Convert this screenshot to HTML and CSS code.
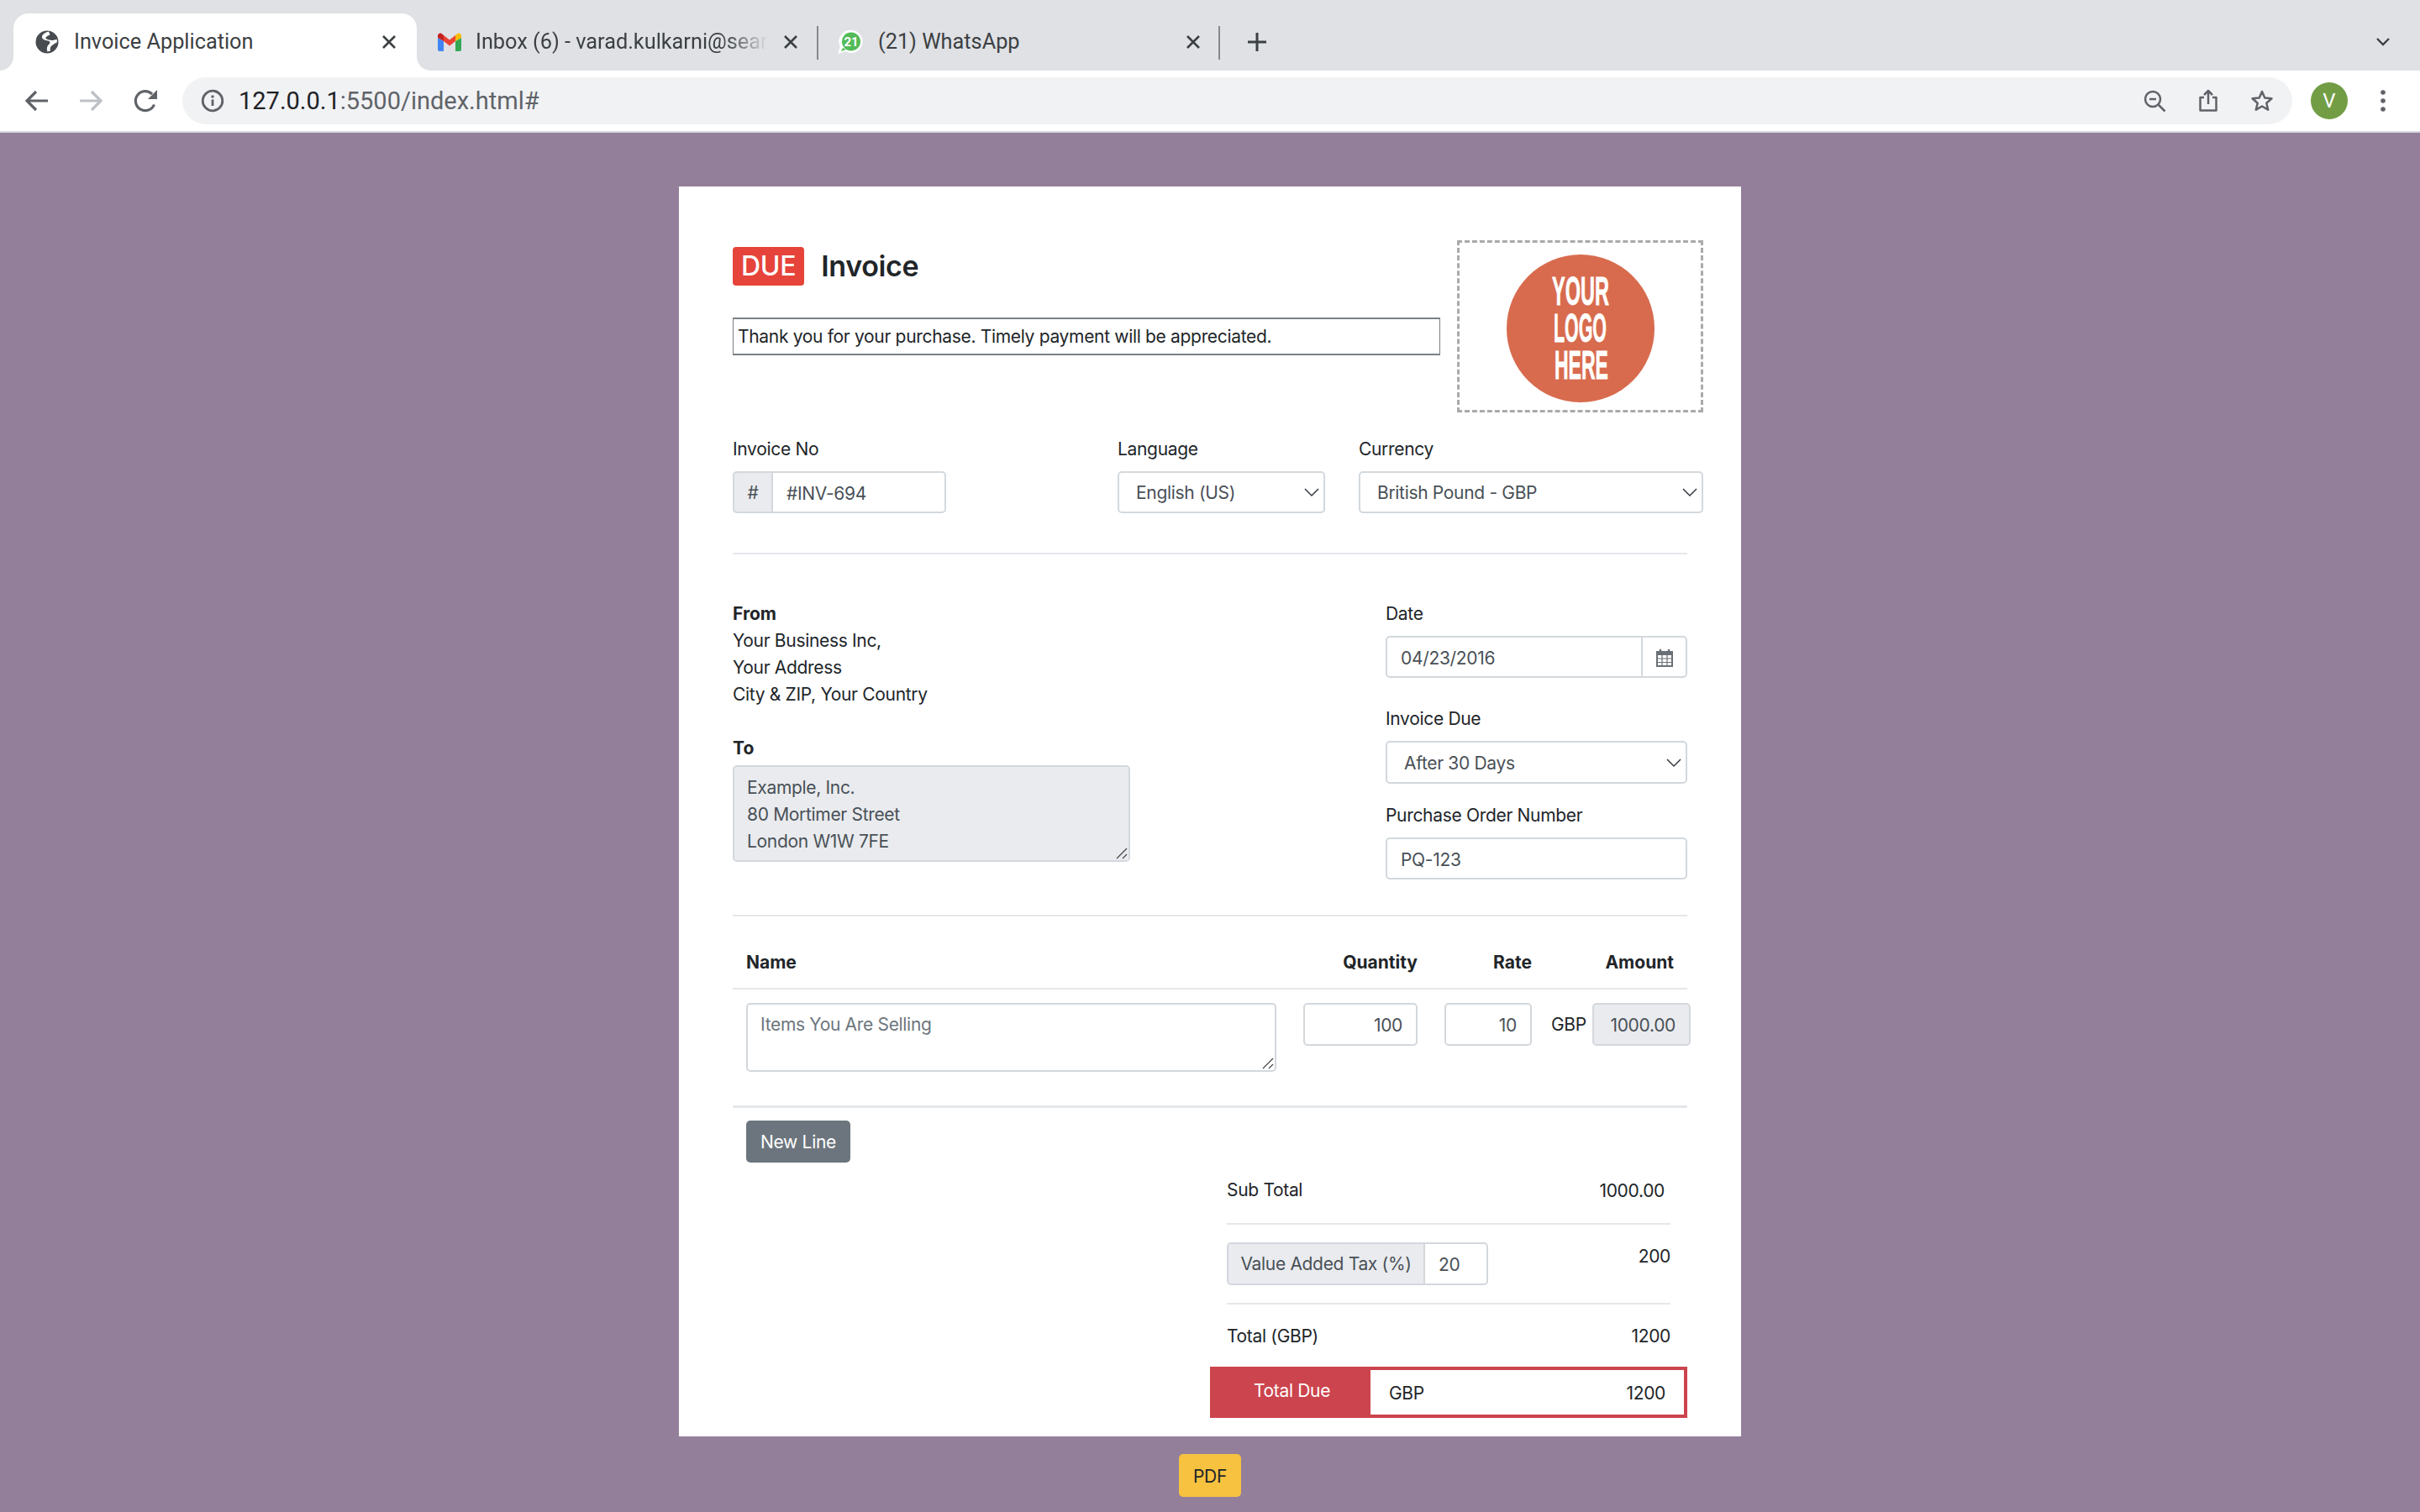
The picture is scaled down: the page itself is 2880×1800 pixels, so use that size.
FILE: index.html
```html
<!DOCTYPE html>
<html lang="en">
<head>
  <meta charset="UTF-8" />
  <title>Invoice Application</title>
  <link rel="stylesheet" href="styles.css">
</head>
<body>
  <header class="browser">
    <div class="tabstrip">
      <div class="tab tab-active">
        <svg class="favicon" viewBox="0 0 28 28"><circle cx="14" cy="14" r="13.500" fill="#484b50"/><path d="M16 1.500c-4 1-8 3.500-8 6.500s4 4 7 4.500c3 .5 3 2.500 1.500 4-2 2-3.500 4-2 9l3.500-1c-1-3 0-5 2-6.500s3.500-3 5.500-3l.5-4c-3 0-5 1.500-7 1-2-.5-6-1-6.500-2.500s3-3.500 5-4z" fill="#fff"/></svg>
        <span class="tab-title">Invoice Application</span>
        <svg class="tab-close" viewBox="0 0 18 18"><path d="M2 2l14 14M16 2L2 16" stroke="#3c4043" stroke-width="2.600" fill="none"/></svg>
      </div>
      <div class="tab">
        <svg class="favicon favicon-gmail" viewBox="0 0 30 22"><path d="M1 6v14a2 2 0 0 0 2 2h5V10z" fill="#4285f4"/><path d="M22 10v12h5a2 2 0 0 0 2-2V6z" fill="#34a853"/><path d="M22 3v7l7-4V3.500C29 1 26 0 24.500 1z" fill="#fbbc04"/><path d="M8 10V3l7 5.500L22 3v7l-7 5.500z" fill="#ea4335"/><path d="M1 3.500V6l7 4V3L5.500 1C4 0 1 1 1 3.500z" fill="#c5221f"/></svg>
        <span class="tab-title tab-title-fade">Inbox (6) - varad.kulkarni@searce.com</span>
        <svg class="tab-close" viewBox="0 0 18 18"><path d="M2 2l14 14M16 2L2 16" stroke="#3c4043" stroke-width="2.600" fill="none"/></svg>
      </div>
      <div class="tab tab-sep">
        <svg class="favicon favicon-wa" viewBox="0 0 32 28"><path d="M17 0a13.500 13.500 0 1 1-6.500 25.300L1 28l2.800-8.500A13.500 13.500 0 0 1 17 0z" fill="#fff"/><circle cx="17" cy="13.500" r="11" fill="#53bb58"/><path d="M7 21l-2 4 6-2z" fill="#53bb58"/><text x="17" y="19" text-anchor="middle" class="badge-count">21</text></svg>
        <span class="tab-title">(21) WhatsApp</span>
        <svg class="tab-close" viewBox="0 0 18 18"><path d="M2 2l14 14M16 2L2 16" stroke="#3c4043" stroke-width="2.600" fill="none"/></svg>
      </div>
      <div class="tab-sep-end"></div>
      <svg class="new-tab" viewBox="0 0 24 24"><path d="M12 1v22M1 12h22" stroke="#3c4043" stroke-width="3" fill="none"/></svg>
      <svg class="tab-list" viewBox="0 0 18 12"><path d="M2 2l7 7 7-7" stroke="#3c4043" stroke-width="2.400" fill="none"/></svg>
    </div>
    <div class="toolbar">
      <svg class="tool" viewBox="0 0 32 32"><path d="M29 16H5M15 5L4 16l11 11" stroke="#5f6368" stroke-width="3.200" fill="none"/></svg>
      <svg class="tool" viewBox="0 0 32 32"><path d="M3 16h24M17 5l11 11-11 11" stroke="#bdc1c6" stroke-width="3.200" fill="none"/></svg>
      <svg class="tool" viewBox="0 0 32 32"><path d="M26.500 20.500A11.500 11.500 0 1 1 24 8" stroke="#5f6368" stroke-width="3.200" fill="none"/><path d="M30 3v11H19z" fill="#5f6368"/></svg>
      <div class="omnibox">
        <svg class="omni-info" viewBox="0 0 28 28"><circle cx="14" cy="14" r="11.800" stroke="#5f6368" stroke-width="2.800" fill="none"/><path d="M14 12.500V20" stroke="#5f6368" stroke-width="2.800"/><circle cx="14" cy="9" r="1.700" fill="#5f6368"/></svg>
        <span class="url"><span class="url-host">127.0.0.1</span>:5500/index.html#</span>
        <div class="omni-actions">
          <svg class="omni-icon" viewBox="0 0 28 28"><circle cx="12" cy="12" r="9" stroke="#5f6368" stroke-width="2.500" fill="none"/><path d="M8 12h8M18.500 18.500l8 8" stroke="#5f6368" stroke-width="2.500" fill="none"/></svg>
          <svg class="omni-icon" viewBox="0 0 28 28"><path d="M9 10H4.500v15.500h19V10H19M14 18V2M9 7l5-5 5 5" stroke="#5f6368" stroke-width="2.500" fill="none" stroke-linejoin="round"/></svg>
          <svg class="omni-icon" viewBox="0 0 28 28"><path d="M14 3l3.300 7.500 8.200.8-6.200 5.400 1.900 8L14 20.500l-7.200 4.200 1.900-8-6.200-5.400 8.200-.8z" stroke="#5f6368" stroke-width="2.500" fill="none" stroke-linejoin="round"/></svg>
        </div>
      </div>
      <div class="avatar">V</div>
      <svg class="menu" viewBox="0 0 6 26"><circle cx="3" cy="3" r="2.800" fill="#5f6368"/><circle cx="3" cy="13" r="2.800" fill="#5f6368"/><circle cx="3" cy="23" r="2.800" fill="#5f6368"/></svg>
    </div>
  </header>

  <main class="page">
    <section class="card">
      <div class="top-row">
        <div class="top-left">
          <div class="title-row">
            <span class="due-badge">DUE</span>
            <span class="title">Invoice</span>
          </div>
          <input class="note" type="text" value="Thank you for your purchase. Timely payment will be appreciated." />
        </div>
        <div class="logo-box">
          <svg class="logo" viewBox="0 0 176 176">
            <circle cx="88" cy="88" r="88" fill="#d86b4e"/>
            <text transform="translate(54 60) scale(.48 1)" class="logo-text">YOUR</text>
            <text transform="translate(56 104) scale(.437 1)" class="logo-text">LOGO</text>
            <text transform="translate(57 148) scale(.47 1)" class="logo-text">HERE</text>
          </svg>
        </div>
      </div>

      <div class="meta-row">
        <div>
          <label>Invoice No</label>
          <div class="input-group w-invoice">
            <span class="addon addon-left addon-hash">#</span>
            <input class="field field-grow" type="text" value="#INV-694" />
          </div>
        </div>
        <div>
          <label>Language</label>
          <select class="field select w-lang"><option>English (US)</option></select>
        </div>
        <div>
          <label>Currency</label>
          <select class="field select w-full"><option>British Pound - GBP</option></select>
        </div>
      </div>
      <hr class="rule rule-meta" />

      <div class="party-row">
        <div class="party-left">
          <div class="strong">From</div>
          <div>Your Business Inc,</div>
          <div>Your Address</div>
          <div>City &amp; ZIP, Your Country</div>
          <label class="strong label-to">To</label>
          <div class="grip-wrap to-wrap">
            <textarea class="to-box" disabled>Example, Inc.
80 Mortimer Street
London W1W 7FE</textarea>
            <svg class="grip" viewBox="0 0 14 14"><path d="M1 13L13 1M8 13l5-5" stroke="#444" stroke-width="1.200" fill="none"/></svg>
          </div>
        </div>
        <div class="party-right">
          <label>Date</label>
          <div class="input-group">
            <input class="field field-grow" type="text" value="04/23/2016" />
            <span class="addon addon-right addon-cal">
              <svg class="cal-icon" viewBox="0 0 20 22"><path d="M1 4h18v17H1z" fill="#fff" stroke="#6a7076" stroke-width="2"/><path d="M1 4h18v4H1z" fill="#6a7076"/><path d="M5 1v5M15 1v5" stroke="#6a7076" stroke-width="2.500"/><path d="M1 12h18M1 16.500h18M7 8v13M13 8v13" stroke="#6a7076" stroke-width="1.200"/></svg>
            </span>
          </div>
          <label class="label-due">Invoice Due</label>
          <select class="field select select-due w-full"><option>After 30 Days</option></select>
          <label class="label-po">Purchase Order Number</label>
          <input class="field w-full" type="text" value="PQ-123" />
        </div>
      </div>
      <hr class="rule rule-party" />

      <div class="line-head">
        <div class="strong">Name</div>
        <div class="strong cell-qty">Quantity</div>
        <div class="strong cell-rate">Rate</div>
        <div class="strong cell-amount">Amount</div>
      </div>
      <hr class="rule" />
      <div class="line-row">
        <div class="grip-wrap item-wrap">
          <textarea class="field item-name" placeholder="Items You Are Selling"></textarea>
          <svg class="grip" viewBox="0 0 14 14"><path d="M1 13L13 1M8 13l5-5" stroke="#444" stroke-width="1.200" fill="none"/></svg>
        </div>
        <div><input class="field num qty" type="text" value="100" /></div>
        <div><input class="field num rate" type="text" value="10" /></div>
        <div class="amount-cell">
          <span>GBP</span>
          <input class="field num amount" type="text" value="1000.00" disabled />
        </div>
      </div>
      <hr class="rule rule-thick" />
      <div class="line-actions"><button class="btn btn-grey">New Line</button></div>

      <div class="totals">
        <div class="total-row total-sub">
          <span>Sub Total</span>
          <span class="sub-value">1000.00</span>
        </div>
        <hr class="rule rule-sub" />
        <div class="total-row total-tax">
          <div class="input-group w-tax">
            <span class="addon addon-left addon-tax">Value Added Tax (%)</span>
            <input class="field field-grow" type="text" value="20" />
          </div>
          <span class="tax-value">200</span>
        </div>
        <hr class="rule rule-sub" />
        <div class="total-row total-grand">
          <span>Total (GBP)</span>
          <span>1200</span>
        </div>
        <div class="total-due">
          <div class="due-label">Total Due</div>
          <div class="due-value"><span>GBP</span><span>1200</span></div>
        </div>
      </div>
    </section>
    <button class="btn btn-pdf">PDF</button>
  </main>
</body>
</html>
```

FILE: styles.css
```css
* {
  box-sizing: border-box;
}
html, body {
  margin: 0;
  height: 100%;
}
body {
  font-family: Inter, "Liberation Sans", sans-serif;
  font-size: 21px;
  line-height: 32px;
  letter-spacing: -0.32px;
  color: #212529;
  background: #947f9b;
  overflow: hidden;
}

/* browser frame */
.browser {
  background: #fff;
  letter-spacing: 0;
}
.tabstrip {
  display: flex;
  align-items: flex-start;
  height: 84px;
  padding: 16px 0 0 16px;
  background: #dfe1e5;
  position: relative;
}
.tab {
  position: relative;
  display: flex;
  align-items: center;
  gap: 18px;
  width: 478px;
  height: 68px;
  padding: 0 24px 0 24px;
  font-family: Roboto, sans-serif;
  font-size: 25.300px;
  color: #3c4043;
}
.tab-active {
  width: 480px;
  padding-left: 26px;
  background: #fff;
  border-radius: 18px 18px 0 0;
}
.tab-active::before,
.tab-active::after {
  content: "";
  position: absolute;
  bottom: 0;
  width: 16px;
  height: 16px;
}
.tab-active::before {
  left: -16px;
  background: radial-gradient(circle at 0 0, #dfe1e5 15.500px, #fff 16px);
}
.tab-active::after {
  right: -16px;
  background: radial-gradient(circle at 100% 0, #dfe1e5 15.500px, #fff 16px);
}
.tab-sep {
  width: 475px;
  padding-right: 20px;
  padding-left: 22px;
}
.tab-sep::before {
  content: "";
  position: absolute;
  left: -2px;
  top: 15px;
  width: 2px;
  height: 40px;
  background: #85888d;
}
.tab-sep-end {
  width: 2px;
  height: 40px;
  margin: 15px 0 0 1px;
  background: #85888d;
}
.favicon {
  flex: none;
  width: 28px;
  height: 28px;
}
.favicon-gmail {
  width: 30px;
  height: 22px;
  margin-right: -2px;
}
.favicon-wa {
  width: 32px;
  margin-right: -1px;
}
.badge-count {
  font-family: Roboto, sans-serif;
  font-size: 15px;
  font-weight: 700;
  fill: #fff;
}
.tab-title {
  flex: 1;
  min-width: 0;
  white-space: nowrap;
  overflow: hidden;
}
.tab-title-fade {
  -webkit-mask-image: linear-gradient(to right, #000 85%, transparent 100%);
  mask-image: linear-gradient(to right, #000 85%, transparent 100%);
}
.tab-close {
  flex: none;
  width: 18px;
  height: 18px;
}
.new-tab {
  width: 24px;
  height: 24px;
  margin: 22px 0 0 32px;
}
.tab-list {
  width: 18px;
  height: 12px;
  margin: 28px 35px 0 auto;
}
.toolbar {
  display: flex;
  align-items: center;
  height: 74px;
  padding: 0 0 0 28px;
  border-bottom: 2px solid #d8dadf;
}
.tool {
  flex: none;
  width: 32px;
  height: 32px;
  margin-right: 33px;
}
.tool:nth-child(1) {
  margin-right: 32px;
}
.tool:nth-child(3) {
  margin-right: 28px;
}
.omnibox {
  display: flex;
  align-items: center;
  width: 2511px;
  height: 56px;
  padding: 0 22px;
  border-radius: 28px;
  background: #f1f2f4;
  font-family: Roboto, sans-serif;
  font-size: 29px;
  color: #5f6368;
}
.omni-info {
  width: 28px;
  height: 28px;
  margin-right: 17px;
}
.url-host {
  color: #202124;
}
.omni-actions {
  display: flex;
  gap: 36px;
  margin-left: auto;
}
.omni-icon {
  width: 28px;
  height: 28px;
}
.avatar {
  flex: none;
  width: 44px;
  height: 44px;
  margin-left: 22px;
  border-radius: 50%;
  background: #739d45;
  color: #fff;
  font-family: Roboto, sans-serif;
  font-size: 24px;
  line-height: 44px;
  text-align: center;
}
.menu {
  width: 6px;
  height: 26px;
  margin-left: 39px;
}

/* invoice */
.page {
  display: flex;
  flex-direction: column;
  align-items: center;
}
.card {
  width: 1264px;
  margin-top: 64px;
  padding: 64px 0 22px 64px;
  background: #fff;
}
.top-row {
  display: flex;
  gap: 20px;
}
.top-left {
  width: 842px;
  padding-top: 8px;
}
.title-row {
  display: flex;
  align-items: center;
  gap: 20px;
  height: 46px;
}
.due-badge {
  padding: 0 10px;
  border-radius: 4px;
  background: #e6433a;
  color: #fff;
  font-size: 32px;
  font-weight: 500;
  line-height: 46px;
}
.title {
  font-size: 34px;
  font-weight: 600;
}
.note {
  display: block;
  width: 842px;
  height: 45px;
  margin-top: 38px;
  padding: 0 5px;
  border: 1px solid #7a7f85;
  border-width: 2px 1px;
  font: inherit;
  letter-spacing: inherit;
  color: #212529;
}
.logo-box {
  display: flex;
  align-items: center;
  justify-content: center;
  width: 293px;
  height: 205px;
  padding-top: 4px;
  border: 3px dashed #aaa;
}
.logo {
  width: 176px;
  height: 176px;
}
.logo-text {
  font-family: "Liberation Sans", sans-serif;
  font-size: 49px;
  font-weight: 700;
  letter-spacing: 0;
  fill: #fff;
  stroke: #fff;
  stroke-width: 0.800px;
}
label {
  display: block;
  margin-bottom: 10px;
}
.meta-row {
  display: grid;
  grid-template-columns: 458px 287px 410px;
  margin-top: 28px;
}
.field {
  display: block;
  height: 50px;
  padding: 2px 16px 0;
  border: 2px solid #d3d8dd;
  border-radius: 5px;
  background: #fff;
  font: inherit;
  letter-spacing: inherit;
  color: #495057;
}
.select {
  padding-left: 20px;
  appearance: none;
  -webkit-appearance: none;
  background-image: url("data:image/svg+xml,%3Csvg xmlns='http://www.w3.org/2000/svg' viewBox='0 0 18 12'%3E%3Cpath d='M1 2l8 8 8-8' stroke='%23343a40' stroke-width='1.500' fill='none'/%3E%3C/svg%3E");
  background-repeat: no-repeat;
  background-position: right 5px center;
  background-size: 18px 12px;
}
.select-due {
  height: 51px;
}
.w-invoice {
  width: 254px;
}
.w-lang {
  width: 247px;
}
.w-full {
  width: 100%;
}
.w-tax {
  width: 311px;
}
.input-group {
  display: flex;
  height: 50px;
}
.input-group.w-tax {
  height: 51px;
}
.field-grow {
  flex: 1;
  min-width: 0;
  height: 100%;
}
.addon {
  display: flex;
  flex: none;
  align-items: center;
  justify-content: center;
  padding-top: 1px;
  border: 2px solid #d3d8dd;
  background: #e9ebee;
  color: #495057;
}
.addon-left {
  border-right: 0;
  border-radius: 5px 0 0 5px;
}
.addon-left + .field {
  border-radius: 0 5px 5px 0;
}
.addon-hash {
  width: 46px;
}
.addon-tax {
  width: 234px;
}
.input-group > .field:first-child {
  border-radius: 5px 0 0 5px;
}
.addon-right {
  width: 53px;
  border-left: 0;
  border-radius: 0 5px 5px 0;
}
.addon-cal {
  background: #fff;
}
.cal-icon {
  width: 20px;
  height: 22px;
}
.rule {
  width: 1136px;
  height: 2px;
  margin: 0;
  border: 0;
  background: #e5e7ea;
}
.rule-meta {
  margin-top: 47px;
}
.party-row {
  display: grid;
  grid-template-columns: 777px 359px;
  padding-top: 55px;
}
.strong {
  font-weight: 700;
  letter-spacing: 0;
}
.label-to {
  margin: 32px 0 4px;
}
.grip-wrap {
  position: relative;
}
.to-wrap {
  width: 473px;
}
.item-wrap {
  width: 631px;
}
.grip {
  position: absolute;
  right: 3px;
  bottom: 3px;
  width: 14px;
  height: 14px;
}
.to-box {
  display: block;
  width: 473px;
  height: 115px;
  padding: 9px 15px;
  border: 2px solid #d3d8dd;
  border-radius: 5px;
  background: #e9ebee;
  font: inherit;
  letter-spacing: inherit;
  color: #495057;
  opacity: 1;
  resize: none;
}
.label-due {
  margin-top: 33px;
}
.label-po {
  margin-top: 22px;
}
.rule-party {
  margin-top: 42px;
}
.line-head,
.line-row {
  display: grid;
  grid-template-columns: 663px 168px 127px 166px;
  padding-left: 16px;
}
.line-head {
  padding-top: 39px;
  padding-bottom: 14px;
}
.cell-qty {
  padding-right: 32px;
  text-align: right;
}
.cell-rate {
  padding-right: 23px;
  text-align: right;
}
.cell-amount {
  padding-right: 20px;
  text-align: right;
}
.line-row {
  padding-top: 16px;
}
.item-name {
  width: 631px;
  height: 82px;
  padding: 8px 15px;
  resize: none;
}
.item-name::placeholder {
  color: #6c757d;
  opacity: 1;
}
.num {
  height: 51px;
  text-align: right;
}
.qty {
  width: 136px;
}
.rate {
  width: 104px;
}
.amount-cell {
  display: flex;
  align-items: flex-start;
  justify-content: space-between;
  line-height: 51px;
}
.amount {
  width: 117px;
  padding: 2px 16px 0 0;
  background: #e9ebee;
  opacity: 1;
}
.rule-thick {
  height: 3px;
  margin-top: 40px;
}
.line-actions {
  padding: 15px 0 0 16px;
}
.btn {
  display: block;
  height: 50px;
  padding: 2px 0 0;
  border: 0;
  border-radius: 5px;
  font: inherit;
  letter-spacing: inherit;
}
.btn-grey {
  width: 124px;
  background: #6c757d;
  color: #fff;
}
.btn-pdf {
  width: 74px;
  height: 51px;
  margin-top: 21px;
  background: #f6c23f;
  color: #212529;
}
.totals {
  width: 528px;
  margin-left: 588px;
  padding-top: 17px;
}
.total-row {
  display: flex;
  justify-content: space-between;
}
.sub-value {
  margin: 1px 7px -1px 0;
}
.rule-sub {
  width: 528px;
  margin-top: 23px;
}
.total-tax {
  align-items: flex-start;
  padding-top: 21px;
}
.tax-value {
  margin-top: 1px;
}
.total-tax + .rule-sub {
  margin-top: 21px;
}
.total-grand {
  padding-top: 22px;
}
.total-due {
  display: flex;
  width: 568px;
  height: 61px;
  margin: 20px 0 0 -20px;
  border: 4px solid #cc444d;
}
.due-label {
  width: 187px;
  background: #cc444d;
  color: #fff;
  line-height: 50px;
  text-align: center;
}
.due-value {
  display: flex;
  flex: 1;
  justify-content: space-between;
  padding: 0 22px;
  line-height: 55px;
}
```
